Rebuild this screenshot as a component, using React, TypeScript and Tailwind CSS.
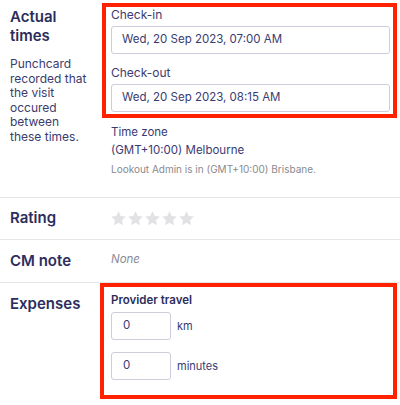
import React from "react";

const font = { fontFamily: "Inter, 'Liberation Sans', sans-serif" };

function Star() {
  return (
    <svg viewBox="0 0 24 24" className="w-[17px] h-[17px]" fill="#e2e2e4">
      <path d="M12 1.8l3.1 6.6 7.2.9-5.3 5 1.4 7.1L12 17.9l-6.4 3.5 1.4-7.1-5.3-5 7.2-.9z" />
    </svg>
  );
}

function DateInput({ value }: { value: string }) {
  return (
    <div className="h-[28px] w-full rounded-[3px] border border-[#cdcddc] bg-white pl-[10px] flex items-center text-[11.5px] text-[#3a3b72]">
      {value}
    </div>
  );
}

function SmallInput({ value, unit }: { value: string; unit: string }) {
  return (
    <div className="flex items-center gap-[6px]">
      <div className="h-[28px] w-[60px] rounded-[3px] border border-[#cdcddc] bg-white pl-[11px] flex items-center text-[11.5px] text-[#3a3b72]">
        {value}
      </div>
      <span className="text-[11px] text-[#3a3b72]">{unit}</span>
    </div>
  );
}

export default function App() {
  return (
    <div className="w-[400px] h-[405px] bg-white overflow-hidden" style={font}>
      {/* Actual times */}
      <div className="flex h-[197px]">
        <div className="w-[100px] pl-[10px] pt-[7px] shrink-0">
          <h2 className="text-[15px] leading-[19px] font-semibold text-[#2c2d5c]">
            Actual
            <br />
            times
          </h2>
          <p className="mt-[12px] w-[80px] text-[12px] leading-[14.5px] text-[#3a3b6e]">
            Punchcard recorded that the visit occured between these times.
          </p>
        </div>
        <div className="flex-1 pt-[3px]">
          <div className="ml-[2px] mr-[3px] border-4 border-[#ff2200] pl-[5px] pr-[3px] pb-[2px]">
            <div className="text-[12px] leading-[15px] text-[#3a3b72]">Check-in</div>
            <div className="mt-[4px]">
              <DateInput value="Wed, 20 Sep 2023, 07:00 AM" />
            </div>
            <div className="mt-[11px] text-[12px] leading-[15px] text-[#3a3b72]">Check-out</div>
            <div className="mt-[4px]">
              <DateInput value="Wed, 20 Sep 2023, 08:15 AM" />
            </div>
          </div>
          <div className="pl-[11px] mt-[5px]">
            <div className="text-[11.5px] leading-[18px] text-[#3a3b72]">Time zone</div>
            <div className="text-[11.5px] leading-[18px] text-[#3a3b72]">(GMT+10:00) Melbourne</div>
            <div className="mt-[3px] text-[10px] leading-[14px] text-[#8a8a8e]">
              Lookout Admin is in (GMT+10:00) Brisbane.
            </div>
          </div>
        </div>
      </div>

      {/* Rating */}
      <div className="flex items-center h-[42px] border-t border-[#e6e6e8]">
        <div className="w-[100px] pl-[10px] text-[15px] font-semibold text-[#2c2d5c]">Rating</div>
        <div className="flex pl-[10px]">
          <Star />
          <Star />
          <Star />
          <Star />
          <Star />
        </div>
      </div>

      {/* CM note */}
      <div className="flex items-center h-[43px] border-t border-[#e6e6e8]">
        <div className="w-[100px] pl-[10px] text-[15px] font-semibold text-[#2c2d5c]">CM note</div>
        <div className="pl-[11px] text-[11.5px] italic text-[#8a8a92] -mt-[3px]">None</div>
      </div>

      {/* Expenses */}
      <div className="flex border-t border-[#e6e6e8]">
        <div className="w-[100px] pl-[10px] pt-[11px] text-[15px] leading-[19px] font-semibold text-[#2c2d5c] shrink-0">
          Expenses
        </div>
        <div className="flex-1 mr-[3px] border-4 border-[#ff2200] pl-[7px] pt-[6px] pb-[15px]">
          <div className="text-[11.5px] leading-[15px] font-semibold text-[#2c2d5c]">Provider travel</div>
          <div className="mt-[4px]">
            <SmallInput value="0" unit="km" />
          </div>
          <div className="mt-[12px]">
            <SmallInput value="0" unit="minutes" />
          </div>
        </div>
      </div>
    </div>
  );
}
